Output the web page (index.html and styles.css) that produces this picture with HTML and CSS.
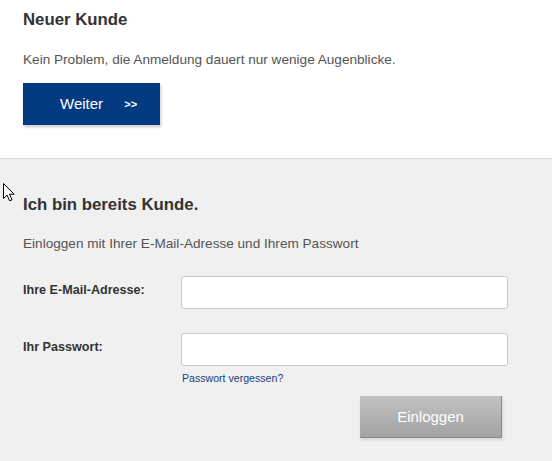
FILE: index.html
```html
<!DOCTYPE html>
<html lang="de">
<head>
  <meta charset="UTF-8">
  <title>Anmeldung</title>
  <link rel="stylesheet" href="styles.css">
</head>
<body>
  <!-- Neukunden -->
  <div class="section new-customer">
    <h2>Neuer Kunde</h2>
    <p>Kein Problem, die Anmeldung dauert nur wenige Augenblicke.</p>
    <a href="#" class="btn-next">Weiter <span class="arrows">&gt;&gt;</span></a>
  </div>

  <!-- Bestandskunden -->
  <div class="section login">
    <svg class="pointer" width="13" height="19" viewBox="0 0 13 19">
      <path d="M0.5 0.5 L0.5 15.5 L4 12 L6.6 17.8 L9 16.8 L6.5 11.2 L11.2 11.2 Z" fill="#fff" stroke="#000" stroke-width="1" stroke-linejoin="miter"/>
    </svg>
    <h2>Ich bin bereits Kunde.</h2>
    <p>Einloggen mit Ihrer E-Mail-Adresse und Ihrem Passwort</p>

    <form class="login-form" onsubmit="return false;">
      <label for="email">Ihre E-Mail-Adresse:</label>
      <input type="text" id="email">

      <label for="pass">Ihr Passwort:</label>
      <div class="field">
        <input type="password" id="pass">
        <a href="#" class="forgot">Passwort vergessen?</a>
      </div>

      <div class="actions">
        <button type="submit" class="btn-login">Einloggen</button>
      </div>
    </form>
  </div>
</body>
</html>
```

FILE: styles.css
```css
body {
  margin: 0;
  font-family: "Liberation Sans", Arial, sans-serif;
  color: #555;
  background: #f0f0f0;
}

.section {
  padding: 0 23px;
}
.section h2 {
  margin: 0;
  font-size: 16.8px;
  line-height: 20px;
  font-weight: bold;
  color: #333;
}
.section p {
  margin: 0;
  font-size: 13.6px;
  line-height: 18px;
}

/* oberer Bereich */
.new-customer {
  background: #fff;
  padding-top: 10px;
  padding-bottom: 33px;
  border-bottom: 1px solid #dcdcdc;
}
.new-customer p {
  margin-top: 21px;
}
.btn-next {
  display: block;
  box-sizing: border-box;
  width: 137px;
  height: 42px;
  margin-top: 14px;
  padding-left: 37px;
  background: #043b80;
  color: #fff;
  font-size: 15px;
  line-height: 42px;
  text-decoration: none;
  box-shadow: 1px 2px 3px rgba(0,0,0,0.22);
}
.btn-next .arrows {
  margin-left: 17px;
  font-size: 11px;
  font-weight: bold;
  vertical-align: 1px;
}

/* Login-Bereich */
.login {
  position: relative;
  padding-top: 36px;
  padding-bottom: 23px;
}
.login p {
  margin-top: 20px;
}
.pointer {
  position: absolute;
  left: 3px;
  top: 24px;
}

.login-form {
  display: grid;
  grid-template-columns: 158px 327px;
  row-gap: 24px;
  align-items: start;
  margin-top: 23px;
}
.login-form label {
  font-size: 12.6px;
  font-weight: bold;
  color: #333;
  line-height: 16px;
  padding-top: 6px;
}
.login-form input {
  display: block;
  box-sizing: border-box;
  width: 327px;
  height: 33px;
  margin: 0;
  border: 1px solid #c8c8c8;
  border-radius: 3px;
  background: #fff;
  outline: none;
}
.forgot {
  display: block;
  margin-top: 6px;
  padding-left: 1px;
  font-size: 10.6px;
  line-height: 13px;
  color: #1a3f7e;
  text-decoration: none;
}
.actions {
  grid-column: 2;
  margin-top: -13px;
  padding-left: 179px;
}
.btn-login {
  display: block;
  box-sizing: border-box;
  width: 142px;
  height: 42px;
  padding: 0;
  border: none;
  border-right: 1px solid #8a8a8a;
  border-bottom: 1px solid #8a8a8a;
  background: linear-gradient(#c2c2c2, #a2a2a2);
  color: #fff;
  font-family: inherit;
  font-size: 15px;
  box-shadow: 1px 2px 3px rgba(0,0,0,0.12);
  cursor: pointer;
}
```
